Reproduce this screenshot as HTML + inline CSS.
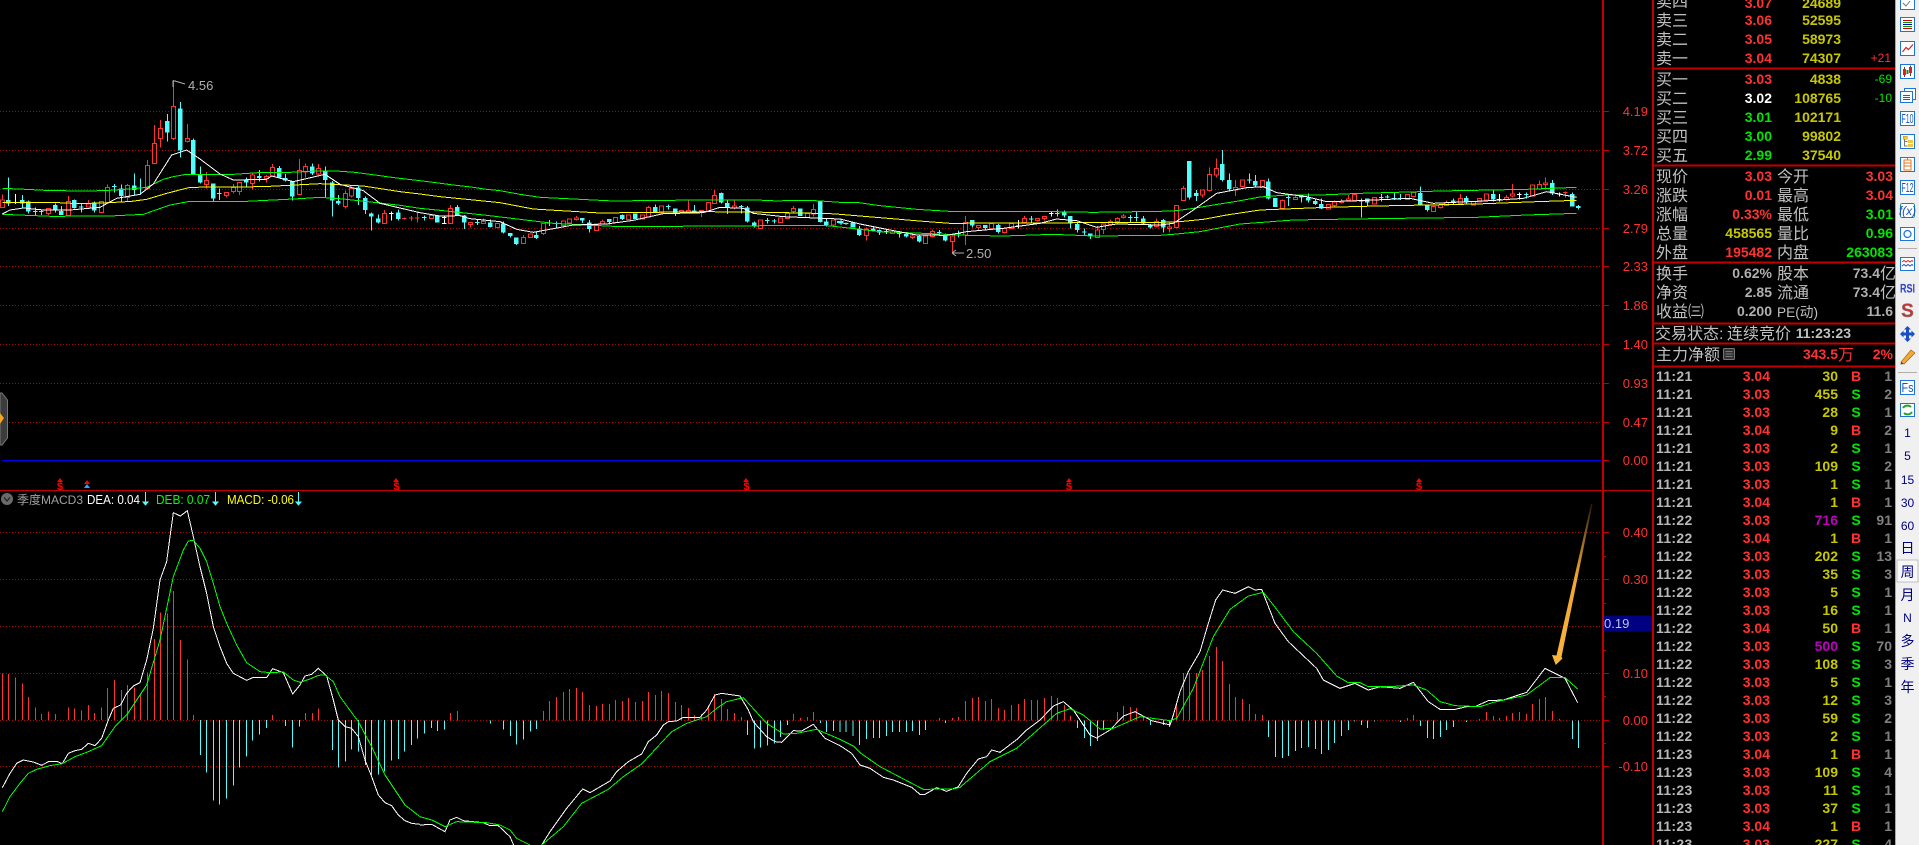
<!DOCTYPE html>
<html lang="zh"><head><meta charset="utf-8"><title>K线</title>
<style>
html,body{margin:0;padding:0;background:#000;width:1919px;height:845px;overflow:hidden}
svg{display:block}
text{font-family:"Liberation Sans","WenQuanYi Zen Hei","Noto Sans CJK SC",sans-serif}
.cj{font-family:"WenQuanYi Zen Hei","Noto Sans CJK SC",sans-serif;font-size:16px;fill:#c0c0c0}
.b{font-weight:bold;font-size:14px;text-anchor:end}
.r{fill:#ff3232}.y{fill:#c8c800}.g{fill:#00e600}.w{fill:#fff}.a{fill:#b0b0b0}.p{fill:#c000c0}.d{fill:#808080}
.ax{font-size:13px;fill:#ff3232;text-anchor:end}
.th{font-size:12px;text-anchor:end}
.tb{font-size:12px;fill:#000080;text-anchor:middle}
.tc{font-family:"WenQuanYi Zen Hei","Noto Sans CJK SC",sans-serif;font-size:14px;fill:#000080;text-anchor:middle}
</style></head><body>
<svg width="1919" height="845" viewBox="0 0 1919 845" xmlns="http://www.w3.org/2000/svg">
<defs><linearGradient id="ar" gradientUnits="userSpaceOnUse" x1="1592" y1="505" x2="1556" y2="665"><stop offset="0" stop-color="#2a1c08"/><stop offset=".2" stop-color="#8a6420"/><stop offset=".45" stop-color="#f0a830"/><stop offset="1" stop-color="#fbb43c"/></linearGradient></defs>
<rect width="1919" height="845" fill="#000"/>

<!-- grid -->
<path shape-rendering="crispEdges" fill="none" stroke="#b00000" stroke-dasharray="1 2" d="M0 111.5H1602M0 150.5H1602M0 189.5H1602M0 228.5H1602M0 266.5H1602M0 305.5H1602M0 344.5H1602M0 383.5H1602M0 422.5H1602M0 532.5H1602M0 579.5H1602M0 626.5H1602M0 673.5H1602M0 720.5H1602M0 766.5H1602"/>
<path shape-rendering="crispEdges" stroke="#0000e6" d="M2 460.5H1602"/>

<!-- candles group A -->
<g shape-rendering="crispEdges" stroke-width="3" transform="translate(0,60) scale(.33333)">
<path fill="none" stroke="#54fcfc" d="M25 352V438M67 405V445M85 422V460M106 442V465M124 448V465M166 430V458M184 438V465M223 418V445M244 432V458M283 425V458M343 372V398M364 373V427M403 340V405M421 355V400M502 162V245M541 126V292M580 235V342M601 320V370M640 370V423M658 385V420M739 353V380M778 330V365M838 318V352M856 342V365M877 365V422M937 310V345M976 320V412M997 363V470M1015 405V435M1075 378V435M1096 410V462M1114 457V512M1135 463V490M1195 448V482M99 455h14M117 455h14M237 441h14M336 380h14M651 400h14"/>
<path fill="#54fcfc" d="M18 420h14V430h-14zM60 420h14V430h-14zM78 425h14V455h-14zM159 435h14V450h-14zM177 453h14V465h-14zM216 420h14V444h-14zM276 428h14V452h-14zM357 385h14V408h-14zM396 376h14V390h-14zM495 183h14V218h-14zM534 145h14V272h-14zM573 240h14V342h-14zM594 345h14V368h-14zM633 370h14V416h-14zM732 360h14V368h-14zM771 348h14V354h-14zM831 324h14V352h-14zM849 354h14V362h-14zM870 365h14V410h-14zM930 319h14V340h-14zM969 333h14V360h-14zM990 367h14V422h-14zM1008 423h14V431h-14zM1068 382h14V414h-14zM1089 414h14V450h-14zM1107 460h14V470h-14zM1128 475h14V488h-14zM1188 457h14V477h-14z"/>
<path fill="none" stroke="#fff" d="M46 402V432M39 428h14M1174 455V482M1167 460h14"/>
<path fill="none" stroke="#ff3232" d="M7 403V443M145 445V465M205 408V467M265 420V442M304 425V458M322 373V430M382 372V425M442 300V388M463 195V312M481 180V262M520 60V240M562 192V248M619 336V385M679 397V413M700 372V400M718 367V405M757 337V388M799 345V368M817 312V350M898 297V405M916 310V352M955 312V350M1036 392V445M1054 380V413M1153 450V492M1213 472V478M1234 468V483M1252 455V487M1206 475h14M1227 474h14M1245 474h14"/>
<path fill="#000" stroke="#ff3232" d="M1 420h12V443h-12zM139 445h12V460h-12zM199 425h12V467h-12zM259 432h12V441h-12zM298 425h12V458h-12zM316 382h12V428h-12zM376 377h12V412h-12zM436 316h12V385h-12zM457 250h12V310h-12zM475 205h12V235h-12zM514 140h12V236h-12zM556 235h12V245h-12zM613 361h12V374h-12zM673 397h12V406h-12zM694 383h12V395h-12zM712 367h12V395h-12zM751 345h12V371h-12zM793 349h12V356h-12zM811 322h12V348h-12zM892 332h12V403h-12zM910 319h12V336h-12zM949 325h12V342h-12zM1030 400h12V440h-12zM1048 385h12V408h-12zM1147 460h12V490h-12z"/>
<g fill="none">
<path stroke="#00ff00" d="M7 385L78 388L135 391L233 393L312 392L390 387L440 382L490 358L515 351L558 343L700 343L790 337L870 337L950 333L1008 333L1065 337L1125 345L1190 354L1260 362"/>
<path stroke="#ffff00" d="M7 427L155 427L235 431L330 428L395 424L440 418L500 400L570 382L790 380L960 371L1090 378L1200 395L1260 402"/>
<path stroke="#00ff00" d="M7 463L155 469L330 468L430 463L510 435L570 424L740 424L900 416L960 412L1030 417L1130 428L1200 436L1260 445"/>
<path stroke="#fff" d="M7 462L30 450L70 444L130 450L210 450L300 442L350 415L420 403L460 372L515 285L560 270L600 297L660 342L700 360L800 358L815 348L880 365L975 343L1020 373L1090 392L1140 430L1260 458"/>
</g></g>

<!-- candles group B -->
<g shape-rendering="crispEdges" stroke-width="3" transform="translate(420,150) scale(.33333)">
<path fill="none" stroke="#54fcfc" d="M13 197V212M52 197V218M112 165V197M133 195V237M172 210V225M211 208V233M250 215V250M271 249V263M289 262V285M349 245V267M388 210V228M409 215V232M487 204V219M508 210V248M568 207V224M607 193V210M646 190V207M706 163V187M745 163V178M766 175V198M823 165V190M904 127V160M922 150V192M964 165V190M982 168V218M1003 214V233M1042 204V220M1063 207V220M1141 175V198M1201 151V218M1219 205V230M1258 213V219M6 203h14M165 217h14M381 219h14M738 169h14M957 170h14M1035 211h14M1056 213h14"/>
<path fill="#54fcfc" d="M45 197h14V218h-14zM105 171h14V197h-14zM126 197h14V218h-14zM204 218h14V231h-14zM243 220h14V248h-14zM264 249h14V258h-14zM282 262h14V282h-14zM342 255h14V264h-14zM480 204h14V212h-14zM501 217h14V237h-14zM561 207h14V216h-14zM600 195h14V207h-14zM639 190h14V207h-14zM699 171h14V186h-14zM759 175h14V191h-14zM816 181h14V187h-14zM897 129h14V158h-14zM915 159h14V172h-14zM975 172h14V215h-14zM996 217h14V230h-14zM1134 175h14V198h-14zM1194 155h14V216h-14zM1212 214h14V225h-14zM1251 213h9V219h-9z"/>
<path fill="none" stroke="#fff" d="M73 200V222M66 203h14M66 220h14"/>
<path fill="none" stroke="#ff3232" d="M34 197V206M91 165V221M151 217V233M190 205V222M232 220V235M310 255V282M331 252V264M370 220V255M430 213V228M448 205V220M469 198V211M529 222V243M547 208V223M586 202V218M625 195V210M667 195V208M685 168V202M724 168V190M784 180V190M805 148V190M844 181V201M865 158V186M883 120V162M943 150V179M1021 210V236M1081 204V218M1102 190V206M1120 168V187M1162 190V203M1180 162V200M1240 210V228"/>
<path fill="#000" stroke="#ff3232" d="M28 197h12V206h-12zM85 176h12V221h-12zM145 217h12V224h-12zM184 215h12V221h-12zM226 220h12V233h-12zM304 262h12V281h-12zM325 252h12V263h-12zM364 220h12V250h-12zM424 213h12V227h-12zM442 207h12V219h-12zM463 204h12V209h-12zM523 222h12V242h-12zM541 214h12V222h-12zM580 202h12V218h-12zM619 195h12V209h-12zM661 195h12V207h-12zM679 172h12V201h-12zM718 168h12V189h-12zM778 181h12V189h-12zM799 181h12V186h-12zM838 181h12V186h-12zM859 158h12V185h-12zM877 136h12V161h-12zM937 168h12V174h-12zM1015 210h12V236h-12zM1075 204h12V218h-12zM1096 190h12V206h-12zM1114 175h12V185h-12zM1156 190h12V203h-12zM1174 178h12V192h-12zM1234 210h12V225h-12z"/>
<g fill="none">
<path stroke="#00ff00" d="M0 92L40 97L100 105L145 110L200 118L240 122L300 133L360 142L480 148L580 153L735 151L870 150L1010 150L1075 153L1110 151L1170 151L1260 157"/>
<path stroke="#ffff00" d="M0 132L60 140L160 150L240 158L340 177L440 183L540 189L860 185L1050 187L1230 191L1260 193"/>
<path stroke="#00ff00" d="M0 175L60 181L200 196L300 208L400 220L600 230L1210 226L1260 231"/>
<path stroke="#fff" d="M0 188L60 198L120 197L150 206L240 215L290 238L340 247L400 236L460 225L560 222L640 211L730 191L850 188L900 172L970 175L1000 190L1090 200L1260 207"/>
</g></g>

<!-- candles group C -->
<g shape-rendering="crispEdges" stroke-width="3" transform="translate(840,150) scale(.33333)">
<path fill="none" stroke="#54fcfc" d="M3 205V225M18 218V225M11 221h14M58 228V258M100 228V245M118 238V255M178 243V262M199 248V262M238 255V278M298 240V258M291 248h14M316 250V275M355 242V262M348 250h14M397 210V232M436 225V240M475 222V250M574 198V220M567 207h14M652 178V200M645 190h14M673 182V202M691 198V236M712 218V248M733 235V255M726 246h14M751 250V267M871 195V218M864 203h14M889 185V215M882 203h14M910 198V222M931 222V235M970 207V248M1048 33V148M1069 120V153M1147 0V95M1168 70V122M1228 70V100M1221 90h14M1246 75V112"/>
<path fill="#54fcfc" d="M-4 213h14V221h-14zM32 218h14V232h-14zM51 235h14V255h-14zM93 235h14V242h-14zM111 240h14V248h-14zM171 245h14V252h-14zM192 252h14V259h-14zM231 258h14V275h-14zM309 256h14V272h-14zM390 210h14V227h-14zM429 225h14V234h-14zM468 225h14V246h-14zM666 187h14V196h-14zM684 198h14V220h-14zM705 222h14V240h-14zM744 250h14V260h-14zM903 205h14V220h-14zM924 225h14V233h-14zM963 210h14V232h-14zM1041 33h14V143h-14zM1062 129h14V138h-14zM1140 42h14V90h-14zM1161 90h14V117h-14zM1239 93h14V107h-14z"/>
<path fill="none" stroke="#fff" d="M139 238V252M132 244h14M535 210V235M528 228h14M634 183V200M627 190h14"/>
<path fill="none" stroke="#ff3232" d="M79 232V272M157 240V252M217 250V267M256 258V282M277 238V262M337 250V307M376 198V285M415 225V240M454 220V237M493 235V250M514 220V235M553 198V218M592 205V215M613 198V212M772 228V264M790 222V252M811 208V225M832 202V220M850 192V205M949 205V232M988 218V248M1009 165V233M1030 108V153M1087 120V142M1108 52V125M1129 25V82M1186 90V138M1207 90V112"/>
<path fill="#000" stroke="#ff3232" d="M73 237h12V257h-12zM151 246h12V250h-12zM211 258h12V262h-12zM250 258h12V280h-12zM271 244h12V260h-12zM331 258h12V275h-12zM370 218h12V255h-12zM409 227h12V232h-12zM448 220h12V236h-12zM487 235h12V248h-12zM508 220h12V235h-12zM547 205h12V218h-12zM586 205h12V211h-12zM607 199h12V205h-12zM766 240h12V262h-12zM784 222h12V238h-12zM805 214h12V224h-12zM826 205h12V215h-12zM844 198h12V203h-12zM943 214h12V229h-12zM982 231h12V235h-12zM1003 166h12V232h-12zM1024 115h12V152h-12zM1081 120h12V135h-12zM1102 73h12V122h-12zM1123 55h12V75h-12zM1180 112h12V120h-12zM1201 90h12V110h-12z"/>
<g fill="none">
<path stroke="#00ff00" d="M0 157L50 157L120 167L230 178L328 184L580 184L760 187L960 184"/>
<path stroke="#ffff00" d="M0 193L120 203L250 214L330 220L960 217"/>
<path stroke="#00ff00" d="M0 231L120 245L250 250L380 256L490 258L640 253L760 258L960 256"/>
<path stroke="#fff" d="M0 207L60 222L150 240L230 255L320 256L380 245L490 235L600 220L650 207L710 212L770 232L830 222L960 225"/>
</g></g>

<!-- candles group D -->
<g shape-rendering="crispEdges" stroke-width="3" transform="translate(1160,140) scale(.33333)">
<path fill="none" stroke="#54fcfc" d="M325 115V178M385 165V198M378 172h14M424 165V188M445 160V188M466 175V195M484 175V207M604 175V233M622 175V198M664 162V185M657 172h14M682 165V175M703 158V180M696 176h14M721 162V180M714 176h14M781 140V195M802 195V215M880 175V192M919 168V190M1000 152V185M1099 158V175M1092 163h14M1177 120V165M1237 158V200M1255 195V208"/>
<path fill="#54fcfc" d="M318 124h14V175h-14zM339 174h14V201h-14zM417 168h14V172h-14zM438 172h14V182h-14zM459 183h14V192h-14zM477 192h14V205h-14zM597 180h14V185h-14zM615 175h14V188h-14zM675 169h14V173h-14zM774 159h14V194h-14zM795 195h14V210h-14zM873 181h14V187h-14zM912 174h14V188h-14zM993 162h14V178h-14zM1170 129h14V160h-14zM1230 162h14V200h-14zM1248 198h14V204h-14z"/>
<path fill="none" stroke="#fff" d="M1018 162V185M1011 178h14M1078 158V178M1071 163h14M1198 158V170M1191 162h14"/>
<path fill="none" stroke="#ff3232" d="M367 178V205M406 163V180M523 182V200M544 177V190M565 165V184M583 160V184M643 172V192M841 193V206M859 182V197M901 162V192M1039 165V182M1057 132V172M1138 122V150M1156 113V148M1216 155V172M1209 158h14"/>
<path fill="#000" stroke="#ff3232" d="M301 122h12V142h-12zM361 181h12V205h-12zM400 172h12V178h-12zM499 194h12V207h-12zM517 186h12V197h-12zM538 184h12V188h-12zM559 177h12V182h-12zM577 163h12V182h-12zM637 172h12V192h-12zM736 163h12V178h-12zM754 158h12V170h-12zM814 200h12V215h-12zM835 195h12V203h-12zM853 188h12V196h-12zM895 175h12V190h-12zM934 185h12V195h-12zM952 175h12V186h-12zM973 162h12V180h-12zM1033 173h12V178h-12zM1051 162h12V168h-12zM1111 135h12V168h-12zM1132 133h12V147h-12zM1150 129h12V134h-12z"/>
<g fill="none">
<path stroke="#00ff00" d="M0 214L50 212L100 205L160 195L230 184L300 171L380 165L480 165L600 160L780 155L840 153L1100 148L1250 142"/>
<path stroke="#ffff00" d="M0 247L60 245L130 238L200 225L300 210L500 202L650 198L950 192L1130 185L1250 181"/>
<path stroke="#00ff00" d="M0 286L40 283L120 275L240 252L400 240L640 236L950 232L1100 225L1250 220"/>
<path stroke="#fff" d="M0 255L40 250L100 210L170 160L260 143L310 140L350 158L440 170L500 185L600 182L750 175L820 190L990 182L1090 175L1160 155L1250 172"/>
</g></g>

<!-- price annotations -->
<g fill="none" stroke="#b0b0b0">
<path d="M173 87V81h3M175 81L185 84"/>
<path d="M952 253H964M952 253l4-3M952 253l4 3"/>
</g>
<text x="188" y="90" font-size="13" fill="#b0b0b0">4.56</text>
<text x="966" y="258" font-size="13" fill="#b0b0b0">2.50</text>

<!-- signal markers -->
<g fill="#f00">
<path d="M57 482l3-4 3 4zM393 482l3-4 3 4zM743 482l3-4 3 4zM1066 482l3-4 3 4zM1416 482l3-4 3 4zM84 484l3-4 3 4z"/>
<text x="60" y="490" font-size="11" font-weight="bold" text-anchor="middle">$</text>
<text x="396.500" y="490" font-size="11" font-weight="bold" text-anchor="middle">$</text>
<text x="746.500" y="490" font-size="11" font-weight="bold" text-anchor="middle">$</text>
<text x="1069" y="490" font-size="11" font-weight="bold" text-anchor="middle">$</text>
<text x="1419" y="490" font-size="11" font-weight="bold" text-anchor="middle">$</text>
</g>
<path d="M84 488l3-4 3 4z" fill="#29a9ff"/>

<!-- handle -->
<path d="M0 393H2L7.500 400V438L2 445H0z" fill="#3c3c3c" stroke="#777"/>
<path d="M0 413L4 418L0 424z" fill="#f5a623"/>

<!-- MACD histogram -->
<g shape-rendering="crispEdges" stroke-width="3" fill="none" transform="translate(0,380) scale(.33333)">
<path stroke="#ff3232" d="M7 1020V880M25 1020V882M46 1020V892M67 1020V910M85 1020V951M106 1020V982M124 1020V1002M145 1020V994M166 1020V1002M205 1020V982M223 1020V985M244 1020V991M265 1020V975M283 1020V999M304 1020V982M322 1020V924M343 1020V900M364 1020V930M382 1020V915M403 1020V923M421 1020V942M442 1020V877M463 1020V777M481 1020V697M502 1020V700M520 1020V633M541 1020V780M562 1020V838M580 1020V1005M817 1020V1005M916 1020V999M937 1020V999M955 1020V985"/>
<path stroke="#54fcfc" d="M601 1020V1125M619 1020V1178M640 1020V1262M658 1020V1274M679 1020V1256M700 1020V1217M718 1020V1163M739 1020V1130M757 1020V1082M778 1020V1064M799 1020V1044M856 1020V1038M877 1020V1103M898 1020V1040M997 1020V1110M1015 1020V1163M1036 1020V1145M1054 1020V1108M1075 1020V1115M1096 1020V1155M1114 1020V1185M1135 1020V1183M1153 1020V1175M1174 1020V1142M1195 1020V1137M1213 1020V1115M1234 1020V1095M1252 1020V1075"/>
<path stroke="#fff" d="M7 1223L30 1180L50 1150L70 1140L100 1146L125 1156L145 1145L170 1144L187 1151L205 1120L225 1112L245 1108L265 1090L285 1097L305 1075L325 1020L340 985L362 975L380 940L400 918L420 908L440 840L460 745L480 600L500 545L510 470L520 398L541 408L562 392L580 470L600 560L620 640L640 740L660 800L680 850L700 880L740 901L760 892L800 893L818 866L850 878L878 942L900 915L915 888L935 883L955 865L980 888L1000 960L1015 1020L1035 1040L1055 1045L1075 1070L1095 1140L1115 1190L1135 1245L1155 1268L1175 1277L1195 1305L1215 1322L1235 1330L1260 1333"/>
<path stroke="#00ff00" d="M7 1295L30 1250L60 1210L85 1180L110 1168L150 1157L187 1151L225 1130L265 1115L305 1097L345 1040L380 1005L440 915L480 780L520 590L550 510L565 483L580 481L600 505L620 545L640 610L660 680L680 730L710 795L740 848L780 875L810 878L850 876L880 900L900 907L930 897L955 886L975 885L1000 905L1020 950L1075 1025L1115 1100L1155 1185L1215 1275L1260 1310"/>
</g>
<g shape-rendering="crispEdges" stroke-width="3" fill="none" transform="translate(420,600) scale(.33333)">
<path stroke="#ff3232" d="M91 361V339M112 361V333M370 361V333M388 361V303M409 361V291M430 361V276M448 361V267M469 361V264M487 361V276M508 361V315M529 361V318M547 361V312M568 361V312M586 361V300M607 361V303M625 361V294M646 361V306M667 361V303M685 361V276M706 361V285M724 361V273M745 361V279M766 361V306M784 361V315M805 361V324M823 361V345M844 361V342M865 361V318M883 361V282M904 361V297M922 361V327M943 361V339M964 361V351M1120 361V342M1141 361V354M1162 361V351M1180 361V336"/>
<path stroke="#54fcfc" d="M13 361V401M34 361V384M52 361V393M73 361V389M211 361V371M250 361V389M271 361V408M289 361V434M310 361V419M331 361V395M349 361V387M982 361V405M1003 361V446M1021 361V443M1042 361V437M1063 361V431M1081 361V411M1102 361V375M1201 361V369M1219 361V396M1240 361V393"/>
<path stroke="#fff" d="M0 675L35 673L75 695L90 660L110 652L130 662L190 668L210 677L235 677L270 710L285 745M365 735L390 695L440 625L488 567L510 578L570 543L590 515L625 485L665 462L685 425L710 405L730 375L745 365L770 363L790 352L840 352L860 330L885 285L905 280L960 288L985 330L1000 365L1040 410L1065 425L1085 427L1120 392L1145 393L1180 373L1215 415L1260 437"/>
<path stroke="#00ff00" d="M0 650L35 660L75 680L110 665L200 668L240 675L270 690L290 715L330 735M365 735L430 680L485 610L565 568L610 530L665 492L715 438L755 395L800 370L860 350L890 325L920 305L970 293L1040 370L1090 402L1130 400L1190 388L1260 418"/>
</g>
<g shape-rendering="crispEdges" stroke-width="3" fill="none" transform="translate(840,600) scale(.33333)">
<path stroke="#ff3232" d="M298 361V354M337 361V354M355 361V351M376 361V303M397 361V294M415 361V291M436 361V303M454 361V297M475 361V324M493 361V330M514 361V315M535 361V312M553 361V297M574 361V300M592 361V300M613 361V294M634 361V288M652 361V294M673 361V315M691 361V348M832 361V336M850 361V318M871 361V321M889 361V324M910 361V351M1009 361V312M1030 361V219M1048 361V219M1069 361V219M1087 361V210M1108 361V168M1129 361V141M1147 361V183M1168 361V252M1186 361V291M1207 361V297M1228 361V312M1246 361V342"/>
<path stroke="#54fcfc" d="M0 361V396M18 361V396M39 361V408M58 361V435M79 361V417M100 361V414M118 361V414M139 361V408M157 361V396M178 361V396M199 361V396M217 361V393M238 361V405M256 361V390M316 361V369M712 361V384M733 361V414M751 361V438M772 361V423M790 361V390M931 361V375M970 361V375M988 361V381"/>
<path stroke="#fff" d="M0 437L35 460L60 495L90 505L130 532L160 540L215 562L240 583L255 583L290 563L320 574L355 560L380 520L415 477L440 470L455 450L480 457L535 415L560 390L600 360L640 318L670 305L700 330L750 405L770 414L810 390L850 348L885 335L935 362L990 375L1000 345L1020 275L1045 215L1080 155L1105 70L1127 0L1148 -30"/>
<path stroke="#00ff00" d="M0 418L40 438L60 458L120 500L200 542L250 568L340 567L360 562L450 485L530 445L650 340L690 326L730 345L780 387L820 385L900 350L990 362L1010 355L1060 265L1120 110L1170 28"/>
</g>
<g shape-rendering="crispEdges" stroke-width="3" fill="none" transform="translate(1160,490) scale(.33333)">
<path stroke="#ff3232" d="M286 691V672M307 691V675M742 691V684M760 691V675M958 691V687M979 691V666M1000 691V678M1018 691V684M1039 691V678M1057 691V669M1078 691V666M1099 691V672M1117 691V642M1138 691V627M1156 691V621M1177 691V663M1198 691V687"/>
<path stroke="#54fcfc" d="M325 691V741M346 691V801M367 691V804M385 691V798M406 691V783M424 691V774M445 691V771M466 691V777M484 691V792M505 691V780M523 691V759M544 691V738M565 691V720M583 691V694M604 691V705M622 691V714M643 691V695M721 691V696M781 691V708M802 691V744M820 691V747M841 691V741M859 691V720M880 691V711M919 691V696M1237 691V747M1255 691V774"/>
<path stroke="#fff" d="M188 300L225 310L265 290L285 300L305 298L345 400L385 455L470 535L490 570L540 595L585 580L625 600L660 590L720 595L760 577L805 635L840 658L885 658L920 650L945 650L985 632L1030 630L1100 607L1155 535L1215 565L1253 638"/>
<path stroke="#00ff00" d="M210 358L265 318L310 307L340 345L400 425L470 490L530 558L565 578L600 578L625 590L690 590L760 585L800 600L840 635L885 647L960 650L1000 637L1100 615L1170 563L1215 563L1253 597"/>
</g>

<!-- arrow -->
<path d="M1592.500 504L1591 504L1556.500 655.500L1552 655L1555.700 665L1562.500 658.500L1561.500 657z" fill="url(#ar)"/>

<!-- frame lines -->
<g shape-rendering="crispEdges" fill="#c00000">
<rect x="1602" y="0" width="2" height="845"/>
<rect x="1652" y="0" width="2" height="845"/>
<rect x="0" y="490" width="1653" height="1"/>
<rect x="1653" y="67.500" width="242" height="2"/>
<rect x="1653" y="164.500" width="242" height="2"/>
<rect x="1653" y="261.500" width="242" height="2"/>
<rect x="1653" y="322.500" width="242" height="2"/>
<rect x="1653" y="342.500" width="242" height="2"/>
<rect x="1653" y="365.500" width="242" height="2"/>
</g>
<path shape-rendering="crispEdges" stroke="#c00000" d="M1604 111.500h5M1604 150.500h5M1604 189.500h5M1604 228.500h5M1604 266.500h5M1604 305.500h5M1604 344.500h5M1604 383.500h5M1604 422.500h5M1604 460.500h5M1604 532.500h5M1604 579.500h5M1604 673.500h5M1604 720.500h5M1604 766.500h5M1604 556.500h2M1604 603.500h2M1604 650.500h2M1604 696.500h2M1604 743.500h2"/>

<!-- axis labels -->
<g class="ax">
<text x="1648" y="116">4.19</text><text x="1648" y="155">3.72</text><text x="1648" y="194">3.26</text><text x="1648" y="233">2.79</text><text x="1648" y="271">2.33</text><text x="1648" y="310">1.86</text><text x="1648" y="349">1.40</text><text x="1648" y="388">0.93</text><text x="1648" y="427">0.47</text><text x="1648" y="465">0.00</text>
<text x="1648" y="537">0.40</text><text x="1648" y="584">0.30</text><text x="1648" y="678">0.10</text><text x="1648" y="725">0.00</text><text x="1648" y="771">-0.10</text>
</g>
<rect x="1604" y="615.500" width="48" height="16" fill="#000080"/>
<text x="1604" y="628" font-size="13" fill="#b9c4e8">0.19</text>

<!-- legend -->
<circle cx="7" cy="499" r="6" fill="#6a6a6a"/>
<path d="M4 497.500L7 501L10 497.500" fill="none" stroke="#222" stroke-width="1.300"/>
<text x="17" y="504" font-size="12" fill="#a0a0a0">季度MACD3</text>
<text x="87" y="504" font-size="13" fill="#fff" textLength="53" lengthAdjust="spacingAndGlyphs">DEA: 0.04</text>
<text x="156" y="504" font-size="13" fill="#00ff00" textLength="54" lengthAdjust="spacingAndGlyphs">DEB: 0.07</text>
<text x="227" y="504" font-size="13" fill="#ffff00" textLength="67" lengthAdjust="spacingAndGlyphs">MACD: -0.06</text>
<g stroke="#54fcfc" fill="#54fcfc">
<path d="M145.500 492V503M215.500 492V503M298.500 492V503"/>
<path d="M143 502h5l-2.500 3zM213 502h5l-2.500 3zM296 502h5l-2.500 3z"/>
</g>

<!-- right panel: order book -->
<g class="cj">
<text x="1656" y="7">卖四</text><text x="1656" y="26">卖三</text><text x="1656" y="45">卖二</text><text x="1656" y="64">卖一</text>
<text x="1656" y="85">买一</text><text x="1656" y="104">买二</text><text x="1656" y="123">买三</text><text x="1656" y="142">买四</text><text x="1656" y="161">买五</text>
<text x="1656" y="182">现价</text><text x="1656" y="201">涨跌</text><text x="1656" y="220">涨幅</text><text x="1656" y="239">总量</text><text x="1656" y="258">外盘</text>
<text x="1777" y="182">今开</text><text x="1777" y="201">最高</text><text x="1777" y="220">最低</text><text x="1777" y="239">量比</text><text x="1777" y="258">内盘</text>
<text x="1656" y="279">换手</text><text x="1656" y="298">净资</text><text x="1656" y="317">收益㈢</text>
<text x="1777" y="279">股本</text><text x="1777" y="298">流通</text>
<text x="1655" y="339">交易状态:</text><text x="1727" y="339">连续竞价</text>
<text x="1656" y="360">主力净额</text>
</g>
<text x="1777" y="317" font-size="14" fill="#c0c0c0" textLength="41" lengthAdjust="spacingAndGlyphs">PE(动)</text>
<g class="b">
<text class="r" x="1772" y="8">3.07</text><text class="r" x="1772" y="25">3.06</text><text class="r" x="1772" y="44">3.05</text><text class="r" x="1772" y="63">3.04</text>
<text class="r" x="1772" y="84">3.03</text><text class="w" x="1772" y="103">3.02</text><text class="g" x="1772" y="122">3.01</text><text class="g" x="1772" y="141">3.00</text><text class="g" x="1772" y="160">2.99</text>
<text class="y" x="1841" y="8">24689</text><text class="y" x="1841" y="25">52595</text><text class="y" x="1841" y="44">58973</text><text class="y" x="1841" y="63">74307</text>
<text class="y" x="1841" y="84">4838</text><text class="y" x="1841" y="103">108765</text><text class="y" x="1841" y="122">102171</text><text class="y" x="1841" y="141">99802</text><text class="y" x="1841" y="160">37540</text>
<text class="r" x="1772" y="181">3.03</text><text class="r" x="1772" y="200">0.01</text><text class="r" x="1772" y="219">0.33%</text><text class="y" x="1772" y="238">458565</text><text class="r" x="1772" y="257">195482</text>
<text class="r" x="1893" y="181">3.03</text><text class="r" x="1893" y="200">3.04</text><text class="g" x="1893" y="219">3.01</text><text class="g" x="1893" y="238">0.96</text><text class="g" x="1893" y="257">263083</text>
<text class="a" x="1772" y="278">0.62%</text><text class="a" x="1772" y="297">2.85</text><text class="a" x="1772" y="316">0.200</text>
<text class="a" x="1880" y="278">73.4</text><text class="a" x="1880" y="297">73.4</text><text class="a" x="1893" y="316">11.6</text>
<text class="r" x="1838" y="359">343.5</text><text class="r" x="1893" y="359">2%</text>
</g>
<text class="cj" x="1880" y="279">亿</text><text class="cj" x="1880" y="298">亿</text><text class="cj" x="1838" y="360" style="fill:#ff3232">万</text>
<text x="1851" y="338" font-size="14" font-weight="bold" fill="#c0c0c0" text-anchor="end">11:23:23</text>
<g class="th">
<text class="r" x="1891" y="62">+21</text><text class="g" x="1892" y="83">-69</text><text class="g" x="1892" y="102">-10</text>
</g>
<g fill="none" stroke="#777"><rect x="1723.500" y="348.500" width="11" height="11" fill="#333" rx="1"/><path d="M1725.500 351.500h7M1725.500 354h7M1725.500 356.500h7"/></g>

<!-- trades -->
<g font-size="14" font-weight="bold">
<g fill="#b8b8b8" letter-spacing=".3">
<text x="1656" y="381">11:21</text><text x="1656" y="399">11:21</text><text x="1656" y="417">11:21</text><text x="1656" y="435">11:21</text><text x="1656" y="453">11:21</text><text x="1656" y="471">11:21</text><text x="1656" y="489">11:21</text><text x="1656" y="507">11:21</text>
<text x="1656" y="525">11:22</text><text x="1656" y="543">11:22</text><text x="1656" y="561">11:22</text><text x="1656" y="579">11:22</text><text x="1656" y="597">11:22</text><text x="1656" y="615">11:22</text><text x="1656" y="633">11:22</text><text x="1656" y="651">11:22</text><text x="1656" y="669">11:22</text><text x="1656" y="687">11:22</text><text x="1656" y="705">11:22</text><text x="1656" y="723">11:22</text><text x="1656" y="741">11:22</text>
<text x="1656" y="759">11:23</text><text x="1656" y="777">11:23</text><text x="1656" y="795">11:23</text><text x="1656" y="813">11:23</text><text x="1656" y="831">11:23</text><text x="1656" y="849">11:23</text>
</g>
<g class="r" text-anchor="end">
<text x="1770" y="381">3.04</text><text x="1770" y="399">3.03</text><text x="1770" y="417">3.03</text><text x="1770" y="435">3.04</text><text x="1770" y="453">3.03</text><text x="1770" y="471">3.03</text><text x="1770" y="489">3.03</text><text x="1770" y="507">3.04</text>
<text x="1770" y="525">3.03</text><text x="1770" y="543">3.04</text><text x="1770" y="561">3.03</text><text x="1770" y="579">3.03</text><text x="1770" y="597">3.03</text><text x="1770" y="615">3.03</text><text x="1770" y="633">3.04</text><text x="1770" y="651">3.03</text><text x="1770" y="669">3.03</text><text x="1770" y="687">3.03</text><text x="1770" y="705">3.03</text><text x="1770" y="723">3.03</text><text x="1770" y="741">3.03</text>
<text x="1770" y="759">3.04</text><text x="1770" y="777">3.03</text><text x="1770" y="795">3.03</text><text x="1770" y="813">3.03</text><text x="1770" y="831">3.04</text><text x="1770" y="849">3.03</text>
</g>
<g class="y" text-anchor="end">
<text x="1838" y="381">30</text><text x="1838" y="399">455</text><text x="1838" y="417">28</text><text x="1838" y="435">9</text><text x="1838" y="453">2</text><text x="1838" y="471">109</text><text x="1838" y="489">1</text><text x="1838" y="507">1</text>
<text class="p" x="1838" y="525">716</text><text x="1838" y="543">1</text><text x="1838" y="561">202</text><text x="1838" y="579">35</text><text x="1838" y="597">5</text><text x="1838" y="615">16</text><text x="1838" y="633">50</text><text class="p" x="1838" y="651">500</text><text x="1838" y="669">108</text><text x="1838" y="687">5</text><text x="1838" y="705">12</text><text x="1838" y="723">59</text><text x="1838" y="741">2</text>
<text x="1838" y="759">1</text><text x="1838" y="777">109</text><text x="1838" y="795">11</text><text x="1838" y="813">37</text><text x="1838" y="831">1</text><text x="1838" y="849">227</text>
</g>
<g text-anchor="middle">
<text class="r" x="1856" y="381">B</text><text class="g" x="1856" y="399">S</text><text class="g" x="1856" y="417">S</text><text class="r" x="1856" y="435">B</text><text class="g" x="1856" y="453">S</text><text class="g" x="1856" y="471">S</text><text class="g" x="1856" y="489">S</text><text class="r" x="1856" y="507">B</text>
<text class="g" x="1856" y="525">S</text><text class="r" x="1856" y="543">B</text><text class="g" x="1856" y="561">S</text><text class="g" x="1856" y="579">S</text><text class="g" x="1856" y="597">S</text><text class="g" x="1856" y="615">S</text><text class="r" x="1856" y="633">B</text><text class="g" x="1856" y="651">S</text><text class="g" x="1856" y="669">S</text><text class="g" x="1856" y="687">S</text><text class="g" x="1856" y="705">S</text><text class="g" x="1856" y="723">S</text><text class="g" x="1856" y="741">S</text>
<text class="r" x="1856" y="759">B</text><text class="g" x="1856" y="777">S</text><text class="g" x="1856" y="795">S</text><text class="g" x="1856" y="813">S</text><text class="r" x="1856" y="831">B</text><text class="g" x="1856" y="849">S</text>
</g>
<g class="d" text-anchor="end">
<text x="1892" y="381">1</text><text x="1892" y="399">2</text><text x="1892" y="417">1</text><text x="1892" y="435">2</text><text x="1892" y="453">1</text><text x="1892" y="471">2</text><text x="1892" y="489">1</text><text x="1892" y="507">1</text>
<text x="1892" y="525">91</text><text x="1892" y="543">1</text><text x="1892" y="561">13</text><text x="1892" y="579">3</text><text x="1892" y="597">1</text><text x="1892" y="615">1</text><text x="1892" y="633">1</text><text x="1892" y="651">70</text><text x="1892" y="669">3</text><text x="1892" y="687">1</text><text x="1892" y="705">3</text><text x="1892" y="723">2</text><text x="1892" y="741">1</text>
<text x="1892" y="759">1</text><text x="1892" y="777">4</text><text x="1892" y="795">1</text><text x="1892" y="813">1</text><text x="1892" y="831">1</text><text x="1892" y="849">4</text>
</g>
</g>

<!-- toolbar -->
<rect x="1895" y="0" width="24" height="845" fill="#f0f0f0"/>
<rect x="1895" y="0" width="1" height="845" fill="#a8a8a8"/>
<g fill="#fff" stroke="#1f74dc" shape-rendering="crispEdges">
<rect x="1900.500" y="-5.500" width="14" height="15"/>
<rect x="1900.500" y="17.500" width="14" height="14"/>
<rect x="1900.500" y="41.500" width="14" height="14"/>
<rect x="1900.500" y="64.500" width="14" height="14"/>
<rect x="1904.500" y="88.500" width="11" height="11"/>
<rect x="1900.500" y="91.500" width="12" height="11"/>
<rect x="1900.500" y="111.500" width="14" height="14"/>
<rect x="1900.500" y="134.500" width="14" height="14"/>
<rect x="1900.500" y="157.500" width="14" height="14"/>
<rect x="1900.500" y="180.500" width="14" height="14"/>
<rect x="1900.500" y="203.500" width="14" height="14" stroke="#0f8a8a" rx="2"/>
<rect x="1900.500" y="227.500" width="14" height="13"/>
<rect x="1900.500" y="257.500" width="14" height="13"/>
<rect x="1900.500" y="380.500" width="14" height="14"/>
<rect x="1900.500" y="403.500" width="14" height="13"/>
</g>
<path d="M1903 3l3 3 4-5" fill="none" stroke="#777"/>
<path shape-rendering="crispEdges" fill="none" d="M1903 20.500h9M1903 28.500h9" stroke="#c00"/>
<path shape-rendering="crispEdges" fill="none" d="M1903 22.500h9M1903 26.500h9" stroke="#090"/>
<path shape-rendering="crispEdges" fill="none" d="M1903 24.500h9" stroke="#00c"/>
<path d="M1902.500 52L1906 47.500L1908.500 49.500L1913 44.500" fill="none" stroke="#e02020" stroke-width="1.200"/>
<g shape-rendering="crispEdges">
<path d="M1904.500 67V77M1910.500 65.500V76" stroke="#444"/><rect x="1903" y="69" width="3" height="6" fill="#e02020"/><rect x="1909" y="67" width="3" height="6" fill="#e02020"/><rect x="1906.500" y="70" width="2" height="4" fill="#1a8a1a"/>
<path d="M1903 95.500h7M1903 97.500h7M1903 99.500h7" stroke="#555"/>
</g>
<text x="1901.500" y="123" font-size="13" fill="#1a56c4" textLength="12" lengthAdjust="spacingAndGlyphs">F10</text>
<text x="1901.500" y="192" font-size="13" fill="#1a56c4" textLength="12" lengthAdjust="spacingAndGlyphs">F12</text>
<text x="1901.500" y="392" font-size="13" fill="#1a56c4" textLength="12" lengthAdjust="spacingAndGlyphs">Fs</text>
<g shape-rendering="crispEdges">
<rect x="1903" y="136" width="4" height="3" fill="#f5c542" stroke="#c09000" stroke-width=".5"/><rect x="1908" y="140" width="5" height="3" fill="#f5c542"/><rect x="1908" y="144" width="5" height="3" fill="#f5c542"/>
<path d="M1904.500 139V146h3M1904.500 141.500h3" stroke="#777" fill="none"/>
<path d="M1904 160h7v10h-7zM1904 163h7M1904 166h7M1907.500 158v2" fill="none" stroke="#e8742a"/>
</g>
<text x="1907.500" y="215" font-size="12" font-style="italic" fill="#1a56c4" text-anchor="middle" font-family="Liberation Serif">f(x)</text>
<circle cx="1907.500" cy="234" r="3.500" fill="none" stroke="#1f74dc" stroke-width="1.300"/>
<rect x="1898" y="248" width="19" height="1" fill="#b0b0b0"/>
<path d="M1902 262l2-1.500 2 1.500 2-1.500 2 1.500 2-1.500 1 1" fill="none" stroke="#e02020"/>
<path d="M1902 266l2-1.500 2 1.500 2-1.500 2 1.500 2-1.500 1 1" fill="none" stroke="#1f4cc4"/>
<text x="1900" y="292.500" font-size="12" font-weight="bold" fill="#2a3fc0" stroke="#6a78d8" stroke-width=".3" textLength="15" lengthAdjust="spacingAndGlyphs">RSI</text>
<text x="1907.500" y="317" font-size="19" font-weight="bold" fill="#c83232" text-anchor="middle" stroke="#888" stroke-width=".5">S</text>
<g fill="#1a4fc4"><path d="M1907.500 326l3.500 3.500h-7zM1907.500 342l3.500-3.500h-7zM1900 334l3.500-3.500v7zM1915 334l-3.500-3.500v7z"/><rect x="1903" y="332.500" width="9" height="3"/><rect x="1906" y="329" width="3" height="10"/></g>
<path d="M1901 362L1911 350L1915 353L1904 364z" fill="#f0a838" stroke="#a86818" stroke-width=".7"/>
<path d="M1901 362l2.500 2-3 .5z" fill="#444"/>
<rect x="1898" y="372" width="19" height="1" fill="#b0b0b0"/>
<path d="M1903 408c2-3 6-3 8-1M1912 412c-2 3-6 3-8 1" fill="none" stroke="#2aa02a" stroke-width="2"/>
<rect x="1897" y="560" width="21" height="22" fill="#f8f8f8" stroke="#c0c0c0"/>
<text class="tb" x="1907.500" y="437">1</text><text class="tb" x="1907.500" y="460">5</text><text class="tb" x="1907.500" y="484">15</text><text class="tb" x="1907.500" y="507">30</text><text class="tb" x="1907.500" y="530">60</text>
<text class="tc" x="1907.500" y="553">日</text><text class="tc" x="1907.500" y="577">周</text><text class="tc" x="1907.500" y="600">月</text>
<text class="tb" x="1907.500" y="622">N</text>
<text class="tc" x="1907.500" y="646">多</text><text class="tc" x="1907.500" y="669">季</text><text class="tc" x="1907.500" y="692">年</text>
</svg>
</body></html>
